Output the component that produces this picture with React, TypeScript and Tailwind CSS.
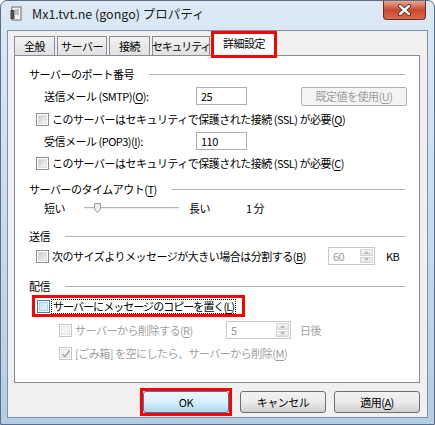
import React from 'react';

// Vista-style checkbox
function Check({ checked = false, disabled = false, focus = false }: { checked?: boolean; disabled?: boolean; focus?: boolean }) {
  const border = disabled ? 'border-[#c6c6c6]' : focus ? 'border-[#3c7fb1]' : 'border-[#8e8f8f]';
  const inner = disabled
    ? 'bg-[#f4f4f4] border-[#e2e2e2]'
    : focus
      ? 'bg-gradient-to-br from-[#bfe3f8] to-[#e9f6fd] border-[#aad3ee]'
      : 'bg-gradient-to-br from-[#cbcbcb] to-[#f7f7f7] border-[#dedede]';
  return (
    <span className={`relative flex h-[13px] w-[13px] shrink-0 items-center justify-center border bg-white ${border}`}>
      <span className={`h-[9px] w-[9px] border ${inner}`} />
      {checked && (
        <svg className="absolute left-[1px] top-[1px]" width="10" height="10" viewBox="0 0 10 10">
          <path d="M1.5 5 L4 7.8 L8.5 1.5" fill="none" stroke="#a9a9a9" strokeWidth="1.6" />
        </svg>
      )}
    </span>
  );
}

function U({ children }: { children: React.ReactNode }) {
  return <span className="underline underline-offset-[2px]">{children}</span>;
}

function Header({ label, className = '' }: { label: React.ReactNode; className?: string }) {
  return (
    <div className={`flex h-[18px] items-center pl-[14px] pr-[14px] ${className}`}>
      <span>{label}</span>
      <span className="ml-[15px] h-px flex-1 bg-[#aab0b6]" />
    </div>
  );
}

function Spin({ value, width, disabled = true }: { value: string; width: string; disabled?: boolean }) {
  return (
    <div className={`flex h-[18px] items-stretch border border-[#c8c8c8] bg-white ${width}`}>
      <span className={`flex-1 pl-[4px] leading-[16px] ${disabled ? 'text-[#9b9b9b]' : ''}`}>{value}</span>
      <div className="flex w-[15px] flex-col gap-px p-px">
        <span className="flex flex-1 items-center justify-center border border-[#d6d6d6] bg-gradient-to-b from-[#f6f6f6] to-[#e2e2e2]">
          <svg width="5" height="3" viewBox="0 0 5 3"><path d="M0 3 L2.5 0 L5 3Z" fill="#b8b8b8" /></svg>
        </span>
        <span className="flex flex-1 items-center justify-center border border-[#d6d6d6] bg-gradient-to-b from-[#f6f6f6] to-[#e2e2e2]">
          <svg width="5" height="3" viewBox="0 0 5 3"><path d="M0 0 L2.5 3 L5 0Z" fill="#b8b8b8" /></svg>
        </span>
      </div>
    </div>
  );
}

function Btn({ children, primary = false }: { children: React.ReactNode; primary?: boolean }) {
  return (
    <div
      className={`flex h-[22px] w-[86px] items-center justify-center rounded-[3px] border ${
        primary
          ? 'border-[#3c7fb1] bg-gradient-to-b from-[#eaf6fd] via-[#d9f0fc] to-[#a7d9f5]'
          : 'border-[#707070] bg-gradient-to-b from-[#f2f2f2] via-[#ebebeb] to-[#cfcfcf]'
      }`}
    >
      {children}
    </div>
  );
}

const tabs = ['全般', 'サーバー', '接続', 'セキュリティ'];

export default function App() {
  return (
    <div className="h-[425px] w-[435px] overflow-hidden whitespace-nowrap font-['Noto_Sans_CJK_JP','Noto_Sans',sans-serif] text-[11px] leading-none tracking-[-0.5px] text-black">
      <div className="flex h-full w-full flex-col rounded-t-[7px] border border-[#5a6f86] bg-gradient-to-b from-[#dce9f5] via-[#c9dced] to-[#b4cde4]">
        {/* title bar */}
        <div className="flex h-[29px] shrink-0 items-start">
          <svg className="ml-[9px] mt-[5px]" width="14" height="16" viewBox="0 0 14 16">
            <rect x="2" y="1" width="9" height="13" fill="#f4f4f4" stroke="#6b6b6b" />
            <rect x="0.5" y="4" width="4" height="9" fill="#4a4a4a" />
            <path d="M5 4h4M5 6h4M5 8h4" stroke="#8a8a8a" />
          </svg>
          <span className="ml-[8px] mt-[7px] text-[12.5px] tracking-[0px] text-[#1b1b1b]">Mx1.tvt.ne (gongo) プロパティ</span>
          <div className="ml-auto mr-[8px] flex h-[19px] w-[43px] items-center justify-center rounded-b-[4px] border border-t-0 border-[#6d2c1f] bg-gradient-to-b from-[#e9a894] via-[#c9472d] to-[#d76a4d]">
            <svg width="15" height="12" viewBox="0 0 15 12">
              <path d="M3 2 L12 10 M12 2 L3 10" stroke="#4a1a12" strokeWidth="4" strokeLinecap="round" />
              <path d="M3 2 L12 10 M12 2 L3 10" stroke="#ffffff" strokeWidth="2.4" strokeLinecap="round" />
            </svg>
          </div>
        </div>

        {/* client area */}
        <div className="mx-[6px] flex h-[388px] flex-col border border-[#7f93a8] bg-[#f0f0f0] pl-[6px] pr-[7px]">
          {/* tabs */}
          <div className="relative z-10 flex h-[24px] items-end">
            {tabs.map((t, i) => (
              <div
                key={t}
                className={`flex h-[19px] items-center justify-center border border-b-0 border-[#898c95] bg-gradient-to-b from-[#f2f2f2] to-[#e1e1e1] ${
                  i === 0
                    ? 'w-[41px]'
                    : i === 1
                      ? 'ml-[2px] w-[50px]'
                      : i === 2
                        ? 'ml-[2px] w-[41px]'
                        : 'ml-[2px] w-[58px] tracking-[-1.2px]'
                }`}
              >
                {t}
              </div>
            ))}
            <div className="-mb-[3px] ml-[1px] flex h-[27px] w-[66px] items-center justify-center border-[3px] border-[#ff0000] bg-white">
              <span className="-mt-[2px]">詳細設定</span>
            </div>
          </div>

          {/* panel */}
          <div className="flex h-[328px] flex-col border border-[#898c95] bg-white">
            <Header label="サーバーのポート番号" className="mt-[9px]" />
            <div className="mt-[2px] flex h-[22px] items-center">
              <span className="ml-[29px] w-[152px]">
                送信メール (SMTP)(<U>O</U>):
              </span>
              <span className="h-[18px] w-[51px] border border-[#abadb3] bg-white pl-[4px] leading-[16px]">25</span>
              <div className="ml-[54px] flex h-[19px] w-[106px] items-center justify-center rounded-[2px] border border-[#adb2b5] bg-[#f4f4f4] text-[#9c9c9c]">
                既定値を使用(<U>U</U>)
              </div>
            </div>
            <div className="mt-[2px] flex h-[20px] items-center gap-[3px] pl-[21px]">
              <Check />
              <span>
                このサーバーはセキュリティで保護された接続 (SSL) が必要(<U>Q</U>)
              </span>
            </div>
            <div className="mt-[1px] flex h-[22px] items-center">
              <span className="ml-[29px] w-[152px]">
                受信メール (POP3)(<U>I</U>):
              </span>
              <span className="h-[18px] w-[51px] border border-[#abadb3] bg-white pl-[4px] leading-[16px]">110</span>
            </div>
            <div className="mt-[1px] flex h-[20px] items-center gap-[3px] pl-[21px]">
              <Check />
              <span>
                このサーバーはセキュリティで保護された接続 (SSL) が必要(<U>C</U>)
              </span>
            </div>

            <Header label={<>サーバーのタイムアウト(<U>T</U>)</>} className="mt-[7px]" />
            <div className="mt-[1px] flex h-[18px] items-center">
              <span className="ml-[29px] w-[40px]">短い</span>
              <div className="relative h-[10px] w-[95px]">
                <span className="absolute left-0 right-0 top-[4px] h-[2px] border-t border-b border-t-[#b5b5b5] border-b-[#f0f0f0] bg-[#e6e6e6]" />
                <svg className="absolute left-[10px] top-0" width="7" height="10" viewBox="0 0 7 10">
                  <path d="M0.5 0.5 H6.5 V6 L3.5 9.5 L0.5 6 Z" fill="#eeeeee" stroke="#9a9a9a" />
                </svg>
              </div>
              <span className="ml-[10px] w-[57px]">長い</span>
              <span>1 分</span>
            </div>

            <Header label="送信" className="mt-[10px]" />
            <div className="mt-[1px] flex h-[20px] items-center pl-[21px]">
              <Check />
              <span className="ml-[3px] w-[276px]">
                次のサイズよりメッセージが大きい場合は分割する(<U>B</U>)
              </span>
              <Spin value="60" width="w-[47px]" />
              <span className="ml-[11px]">KB</span>
            </div>

            <Header label="配信" className="mt-[11px]" />
            <div className="ml-[17px] mt-0 flex h-[22px] w-[213px] items-center border-[3px] border-[#ff0000] pl-[2px]">
              <Check focus />
              <span className="ml-[1px] border border-dotted border-black px-px leading-[13px] tracking-[-0.95px]">
                サーバーにメッセージのコピーを置く(<U>L</U>)
              </span>
            </div>
            <div className="mt-[3px] flex h-[20px] items-center pl-[44px] text-[#a0a0a0]">
              <Check disabled />
              <span className="ml-[3px] w-[151px]">
                サーバーから削除する(<U>R</U>)
              </span>
              <Spin value="5" width="w-[65px]" />
              <span className="ml-[9px]">日後</span>
            </div>
            <div className="mt-[3px] flex h-[20px] items-center pl-[44px] text-[#a0a0a0]">
              <Check disabled checked />
              <span className="ml-[3px]">
                [ごみ箱] を空にしたら、サーバーから削除(<U>M</U>)
              </span>
            </div>
          </div>

          {/* buttons */}
          <div className="mt-[5px] flex items-center justify-end gap-[8px] pr-0">
            <div className="border-[3px] border-[#ff0000]">
              <Btn primary>OK</Btn>
            </div>
            <Btn>キャンセル</Btn>
            <Btn>
              適用(<U>A</U>)
            </Btn>
          </div>
        </div>
      </div>
    </div>
  );
}
